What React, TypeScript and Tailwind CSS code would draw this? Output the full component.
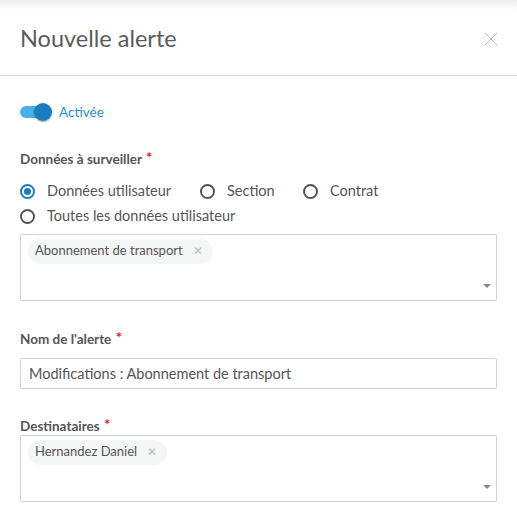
import { X } from "lucide-react";

function Required({ children }: { children: string }) {
  return (
    <div className="text-[13.5px] font-bold leading-[18px] text-[#555]">
      {children} <span className="relative -top-[1px] ml-[1px] text-[15px] text-[#e02424]">*</span>
    </div>
  );
}

function Radio({ label, checked }: { label: string; checked?: boolean }) {
  return (
    <label className="flex items-center gap-[12px]">
      <span
        className={`flex h-[15px] w-[15px] items-center justify-center rounded-full border-2 ${
          checked ? "border-[#1a7dc0]" : "border-[#555]"
        }`}
      >
        {checked && <span className="h-[7px] w-[7px] rounded-full bg-[#1a7dc0]" />}
      </span>
      <span>{label}</span>
    </label>
  );
}

function Chip({ label }: { label: string }) {
  return (
    <span className="inline-flex h-[25px] items-center gap-[10px] rounded-full bg-[#f5f6f6] pl-[7px] pr-[10px] text-[13px] text-[#555]">
      {label}
      <span className="text-[12px] leading-none text-[#bbb]">✕</span>
    </span>
  );
}

function MultiSelect({ value }: { value: string }) {
  return (
    <div className="relative h-[67px] rounded-[2px] border border-[#cfd3d6] px-[7px] pt-[2px]">
      <Chip label={value} />
      <span className="absolute bottom-[12px] right-[5px] h-0 w-0 border-x-[4px] border-t-[4px] border-x-transparent border-t-[#888]" />
    </div>
  );
}

export default function App() {
  return (
    <div className="h-[508px] w-[517px] overflow-hidden bg-white font-['Source_Sans_Pro','Lato',sans-serif] text-[#555]">
      <div className="h-[10px] bg-gradient-to-b from-[#efefef] to-white" />
      <header className="flex h-[66px] items-start justify-between border-b border-[#d6d6d6] pl-[20px] pr-[14px]">
        <h1 className="mt-[13px] text-[23.5px] leading-[30px] text-[#5b5b5b]">Nouvelle alerte</h1>
        <X className="mt-[17px] h-[24px] w-[24px] text-[#bdbdbd]" strokeWidth={1} />
      </header>

      <div className="px-[20px]">
        <div className="mt-[26px] flex items-center gap-[7px]">
          <span className="relative flex h-[18px] w-[32px] items-center">
            <span className="h-[12px] w-[30px] rounded-full bg-[#4ab0ea]" />
            <span className="absolute right-0 top-0 h-[18px] w-[18px] rounded-full bg-[#1a7dc0] shadow-[0_1px_2px_rgba(0,0,0,0.35)]" />
          </span>
          <span className="text-[13.5px] text-[#1f8fd0]">Activée</span>
        </div>

        <div className="mt-[27px]">
          <Required>Données à surveiller</Required>
        </div>

        <div className="mt-[14px] flex flex-col gap-[7px] text-[14.5px] leading-[18px]">
          <div className="flex items-center">
            <div className="w-[180px]">
              <Radio label="Données utilisateur" checked />
            </div>
            <div className="w-[103px]">
              <Radio label="Section" />
            </div>
            <Radio label="Contrat" />
          </div>
          <Radio label="Toutes les données utilisateur" />
        </div>

        <div className="mt-[9px]">
          <MultiSelect value="Abonnement de transport" />
        </div>

        <div className="mt-[28px]">
          <Required>Nom de l'alerte</Required>
        </div>
        <div className="mt-[10px] flex h-[31px] items-center rounded-[2px] border border-[#cfd3d6] px-[8px] text-[14.5px] text-[#555]">
          Modifications : Abonnement de transport
        </div>

        <div className="mt-[27px]">
          <Required>Destinataires</Required>
        </div>
        <div>
          <MultiSelect value="Hernandez Daniel" />
        </div>
      </div>
    </div>
  );
}
